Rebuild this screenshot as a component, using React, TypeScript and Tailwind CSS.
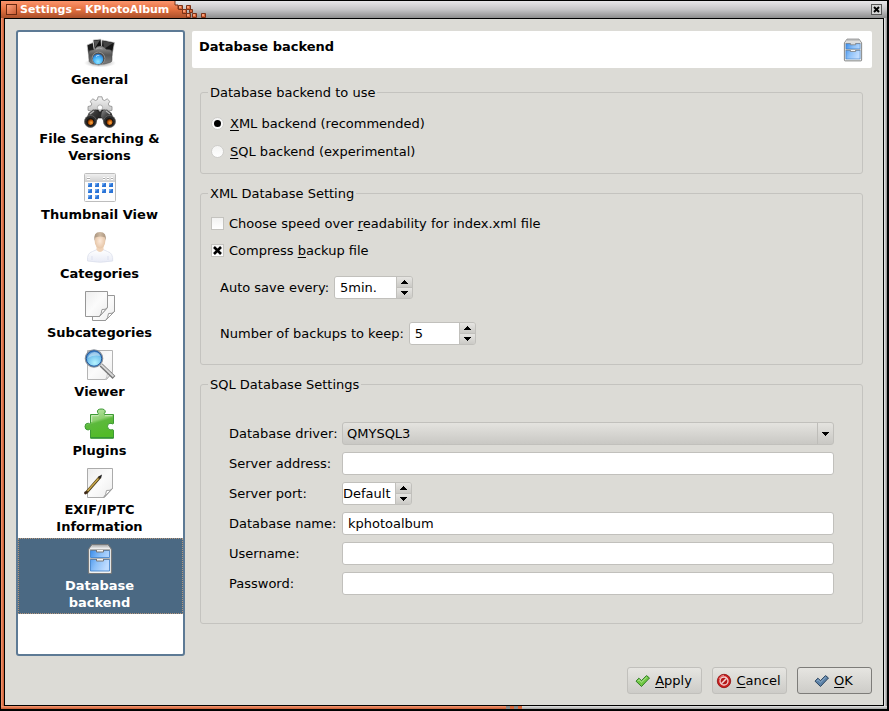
import { useState, type ReactNode } from "react";

type IconProps = { size?: number };

function Svg({ size = 32, children }: { size?: number; children: ReactNode }) {
  return (
    <svg width={size} height={size} viewBox="0 0 32 32" aria-hidden="true" className="block shrink-0">
      {children}
    </svg>
  );
}

function CameraIcon() {
  return (
    <Svg>
      <defs>
        <linearGradient id="camBody" x1="0" y1="0" x2="0" y2="1">
          <stop offset="0" stopColor="#9a9a9a" />
          <stop offset="0.5" stopColor="#565656" />
          <stop offset="1" stopColor="#808080" />
        </linearGradient>
        <radialGradient id="camLens" cx="0.5" cy="0.75" r="0.7">
          <stop offset="0" stopColor="#8fe6ff" />
          <stop offset="0.6" stopColor="#45b2f8" />
          <stop offset="1" stopColor="#2a78cc" />
        </radialGradient>
        <radialGradient id="camShade">
          <stop offset="0" stopColor="#555" stopOpacity="0.8" />
          <stop offset="1" stopColor="#999" stopOpacity="0" />
        </radialGradient>
      </defs>
      <ellipse cx="16" cy="26" rx="16" ry="4.5" fill="url(#camShade)" />
      <path d="M3 8 9 5.500 12 20 5 22Z" fill="#1c1c1c" stroke="#d5d5d5" strokeWidth="0.7" />
      <path d="M9 3 17 2 18 15 11 17Z" fill="#111" stroke="#ddd" strokeWidth="0.8" />
      <path d="M18 3 30.500 5.500 28 19 17 16Z" fill="#151515" stroke="#ccc" strokeWidth="0.7" />
      <path d="m19 4 10 2-9 6z" fill="#444" />
      <path d="m10 4 6-1-5 8z" fill="#555" />
      <path d="M5 15q0-1.500 2-1.800l3-.5 3-3q4-1.500 7 .5l2 2 4 .6q2 .4 2 2.200v8q0 2-2 2.500l-6 1.500H9l-3-1.500q-1-.5-1-2.500z" fill="url(#camBody)" stroke="#444" strokeWidth="0.5" />
      <path d="M12 12q3-2 6.500 0" stroke="#aaa" fill="none" />
      <circle cx="14.500" cy="21.500" r="6.400" fill="#4c4c4c" stroke="#8d8d8d" />
      <circle cx="14" cy="22" r="5.200" fill="url(#camLens)" />
      <path d="M11 20q2-2.600 5-1.700-2.500.6-5 1.700" fill="#d8f2ff" />
    </Svg>
  );
}

function SearchVersionsIcon() {
  return (
    <Svg>
      <defs>
        <linearGradient id="gear" x1="0" y1="0" x2="0" y2="1">
          <stop offset="0" stopColor="#f4f4f4" />
          <stop offset="1" stopColor="#b9b9b9" />
        </linearGradient>
        <linearGradient id="tube" x1="0" y1="0" x2="1" y2="1">
          <stop offset="0" stopColor="#8c8c8c" />
          <stop offset="0.45" stopColor="#3a3a3a" />
          <stop offset="1" stopColor="#151515" />
        </linearGradient>
        <radialGradient id="amber" cx="0.6" cy="0.6">
          <stop offset="0" stopColor="#ffb450" />
          <stop offset="0.6" stopColor="#c9610c" />
          <stop offset="1" stopColor="#5a2500" />
        </radialGradient>
      </defs>
      <path d="M14 .8h4l.6 2.800 2 .9 2.600-1.700 2.600 2.600-1.500 2.500.8 1.900 2.900.7v3.800l-3 .7L21 19H11l-4-4-3-.7v-3.800l3-.7.8-1.900-1.600-2.500 2.700-2.600 2.500 1.700 2-.9z" fill="url(#gear)" stroke="#8c8c8c" strokeWidth="0.800" />
      <circle cx="16" cy="11.500" r="2.600" fill="#fff" stroke="#999" strokeWidth="0.7" />
      <path d="M11 14h3l1.500 2h1l1.500-2h3l1 3-4 5h-4l-4-5z" fill="#2b2b2b" stroke="#111" strokeWidth="0.6" />
      <path d="M4.500 17 9 13.500q3-.5 5 2l1 5-4 8L1 26z" fill="url(#tube)" />
      <path d="M27.500 17 23 13.500q-3-.5-5 2l-1 5 4 8L31 26z" fill="url(#tube)" />
      <circle cx="6.500" cy="25.500" r="6" fill="#2c2c2c" stroke="#666" strokeWidth="0.8" />
      <circle cx="25.500" cy="25.500" r="6" fill="#2c2c2c" stroke="#666" strokeWidth="0.8" />
      <circle cx="6.500" cy="26" r="3.600" fill="url(#amber)" stroke="#111" />
      <circle cx="25.500" cy="26" r="3.600" fill="url(#amber)" stroke="#111" />
      <path d="m6 18 4-3M26 18l-4-3" stroke="#b5b5b5" strokeWidth="1.200" />
    </Svg>
  );
}

function CalendarIcon() {
  const cells = [
    [4, 11], [11, 11], [18, 11], [25, 11],
    [4, 17], [11, 17], [18, 17], [25, 17],
    [4, 23], [11, 23],
  ];
  return (
    <Svg>
      <defs>
        <linearGradient id="calTop" x1="0" y1="0" x2="0" y2="1">
          <stop offset="0" stopColor="#efefef" />
          <stop offset="1" stopColor="#cfcfcf" />
        </linearGradient>
      </defs>
      <rect x="0.500" y="1.500" width="31" height="28" rx="1" fill="#fdfdfd" stroke="#bdbdbd" />
      <rect x="1" y="2" width="30" height="8" fill="url(#calTop)" />
      <path d="M3 5.500h3M19 5.500h2M23 5.500h2M27 5.500h2M3 7.500h3M19 7.500h2M23 7.500h2M27 7.500h2" stroke="#fff" />
      <path d="M3 6.500h3M19 6.500h2M23 6.500h2M27 6.500h2" stroke="#aaa" />
      {cells.map(([x, y]) => (
        <g key={`${x}-${y}`}>
          <rect x={x} y={y} width="4" height="4" fill="#2b74d6" />
          <path d={`M${x} ${y}h3l-3 3z`} fill="#6fa8ef" />
        </g>
      ))}
    </Svg>
  );
}

function PersonIcon() {
  return (
    <Svg>
      <defs>
        <radialGradient id="face">
          <stop offset="0" stopColor="#fdeada" />
          <stop offset="1" stopColor="#e6c6a8" />
        </radialGradient>
        <linearGradient id="shirt" x1="0" y1="0" x2="0" y2="1">
          <stop offset="0" stopColor="#fff" />
          <stop offset="1" stopColor="#e8ebf6" />
        </linearGradient>
        <linearGradient id="hair" x1="0" y1="0" x2="1" y2="0">
          <stop offset="0" stopColor="#a8917b" />
          <stop offset="0.5" stopColor="#cdb9a2" />
          <stop offset="1" stopColor="#ab947d" />
        </linearGradient>
      </defs>
      <path d="M3.500 30q-.7-8 5-9.500l4.500-2h6l4.500 2q5.800 1.500 5.200 9.500-12.500 2.500-25.200 0" fill="url(#shirt)" stroke="#dcdfec" strokeWidth="0.8" />
      <path d="M12.500 15h7v4q-3.500 4-7 0z" fill="#f0d3b8" />
      <ellipse cx="16" cy="10" rx="5.300" ry="7.500" fill="url(#face)" />
      <path d="M10.500 10Q9 1 16 1t5.700 9l-1-3.500q-4-2-9.200 0z" fill="url(#hair)" />
      <path d="M8 29v-4M24 29v-4" stroke="#dde1ef" />
    </Svg>
  );
}

function PageGradient({ id }: { id: string }) {
  return (
    <linearGradient id={id} x1="0" y1="0" x2="1" y2="1">
      <stop offset="0" stopColor="#ededed" />
      <stop offset="0.5" stopColor="#fbfbfb" />
      <stop offset="1" stopColor="#ececec" />
    </linearGradient>
  );
}

function CopyIcon() {
  return (
    <Svg>
      <defs>
        <PageGradient id="copyPage" />
      </defs>
      <path d="M8.500 5.500h22v16l-9 9h-13z" fill="url(#copyPage)" stroke="#979797" />
      <path d="M30.500 21.500q-2 2.500-6 2-.5 5-3 7z" fill="#fff" stroke="#979797" />
      <path d="M1.500 1.500h22v16l-8 9h-14z" fill="url(#copyPage)" stroke="#979797" />
      <path d="M23.500 17.500q-2 2.500-5.500 2-.5 4.500-2.500 7z" fill="#fff" stroke="#979797" />
    </Svg>
  );
}

function ViewerIcon() {
  return (
    <Svg>
      <defs>
        <PageGradient id="viewPage" />
        <radialGradient id="lens" cx="0.55" cy="0.75" r="0.75">
          <stop offset="0" stopColor="#b5f4ff" />
          <stop offset="0.55" stopColor="#79c6ee" />
          <stop offset="1" stopColor="#3a78c2" />
        </radialGradient>
      </defs>
      <path d="M3.500 1.500h25v22l-6 7h-19z" fill="url(#viewPage)" stroke="#b4b4b4" />
      <path d="M28.500 23q-2 2-5 1.500-.3 3.500-2 6z" fill="#fff" stroke="#c5c5c5" />
      <path d="m17 16 13 12.500" stroke="#777" strokeWidth="4" />
      <path d="m17 15.500 12.500 12" stroke="#d8d8d8" strokeWidth="1.800" />
      <circle cx="10" cy="9.500" r="8.500" fill="url(#lens)" stroke="#8a929a" strokeWidth="1.600" />
      <circle cx="10" cy="9.500" r="7.700" fill="none" stroke="#1f5ba6" />
      <path d="M4 9q1-5 6.500-6 5 .5 5.500 4-6-1.500-12 2" fill="#fff" opacity="0.400" />
    </Svg>
  );
}

function PuzzleIcon() {
  return (
    <Svg>
      <defs>
        <linearGradient id="puzzle" x1="0" y1="0" x2="0.3" y2="1">
          <stop offset="0" stopColor="#c2e8af" />
          <stop offset="0.45" stopColor="#8ed070" />
          <stop offset="0.55" stopColor="#5cb93c" />
          <stop offset="1" stopColor="#52bb28" />
        </linearGradient>
      </defs>
      <path d="M6.500 6.500h7.500q.8-1-.5-2.300Q12.800 1.200 17 1t4.300 3q-1.600 1.600-.8 2.500h9v9q-1 .9-2.500-.2-3.500-.5-3.500 3t3.500 3.700q1.500-1 2.500.2v8h-23v-8.400q-1-.9-2.400.2Q1 21.800 1 18.500t3.200-3.300q1.500 1 2.300.1z" fill="url(#puzzle)" stroke="#3d9a35" strokeWidth="1" />
      <path d="M7.700 14V7.700h7M21 7.700h7.300" stroke="#d8f3ca" fill="none" opacity="0.800" />
      <path d="M7 29.800h22" stroke="#2b8b3c" />
    </Svg>
  );
}

function ExifIcon() {
  return (
    <Svg>
      <defs>
        <PageGradient id="exifPage" />
      </defs>
      <path d="M3.500 1.500h25v20l-8 9h-17z" fill="url(#exifPage)" stroke="#ababab" />
      <path d="M28.500 21.500q-2 2.500-6 2-.3 4-3 7z" fill="#fff" stroke="#a0a0a0" />
      <path d="M2 26 16 10" stroke="#4a3a18" strokeWidth="2.800" />
      <path d="M3.500 24 14.500 11.500" stroke="#c9a84a" strokeWidth="1.500" />
      <path d="m14.500 9.500 3.500-2-1 4z" fill="#222" />
      <circle cx="1.500" cy="26" r="1.400" fill="#3b2416" />
    </Svg>
  );
}

function CabinetIcon({ size = 32 }: IconProps) {
  return (
    <Svg size={size}>
      <defs>
        <linearGradient id="cabTop" x1="0" y1="0" x2="0" y2="1">
          <stop offset="0" stopColor="#ababab" />
          <stop offset="1" stopColor="#f7f7f7" />
        </linearGradient>
        <linearGradient id="drawer" x1="0" y1="0" x2="1" y2="0.5">
          <stop offset="0" stopColor="#3c8dea" />
          <stop offset="0.5" stopColor="#8cc0f8" />
          <stop offset="1" stopColor="#bfdcff" />
        </linearGradient>
      </defs>
      <path d="M4.500 6.500 8 1.500h16l3.500 5v23q0 1-1 1h-21q-1 0-1-1z" fill="#f2f2f0" stroke="#77797a" strokeWidth="1.200" />
      <path d="M5.500 6 8.500 2h15l3 4z" fill="url(#cabTop)" />
      <path d="M6.500 7.500h19v7h-19zM6.500 16.500h19V28h-19z" fill="url(#drawer)" stroke="#367bc8" strokeWidth="0.800" />
      <path d="M6 7h20M6 16h20" stroke="#777" />
      <path d="M12.500 7v2h7V7M12.500 16v2h7v-2" fill="#f5f5f5" stroke="#777" />
    </Svg>
  );
}

function CheckIcon({ tone }: { tone: "green" | "blue" }) {
  const dark = tone === "green" ? "#2e7d22" : "#2b4560";
  const fill = tone === "green" ? "#72c844" : "#5d82a8";
  const shine = tone === "green" ? "#b5e59a" : "#91afcb";
  return (
    <svg width="16" height="16" viewBox="0 0 16 16" aria-hidden="true" className="shrink-0">
      <path d="M1 8.200 3.800 5.200 6.500 7.600l5-5 3 2.400-8 8.500z" fill={fill} stroke={dark} strokeLinejoin="round" />
      <path d="M2.600 8.200 4 6.700l2.500 2.400 5.200-5" fill="none" stroke={shine} />
    </svg>
  );
}

function CancelIcon() {
  return (
    <svg width="16" height="16" viewBox="0 0 16 16" aria-hidden="true" className="shrink-0">
      <circle cx="8" cy="8" r="6.700" fill="#c91f1f" stroke="#8c0d0d" strokeWidth="0.8" />
      <circle cx="8" cy="8" r="4" fill="#b51818" stroke="#f3d5d5" strokeWidth="1.300" />
      <path d="m5.300 10.700 5.400-5.400" stroke="#f3d5d5" strokeWidth="1.600" />
      <path d="M3 6q1.500-3.500 5-3.800" stroke="#ef8d8d" fill="none" />
    </svg>
  );
}

const pages: { name: string; icon: ReactNode }[] = [
  { name: "General", icon: <CameraIcon /> },
  { name: "File Searching & Versions", icon: <SearchVersionsIcon /> },
  { name: "Thumbnail View", icon: <CalendarIcon /> },
  { name: "Categories", icon: <PersonIcon /> },
  { name: "Subcategories", icon: <CopyIcon /> },
  { name: "Viewer", icon: <ViewerIcon /> },
  { name: "Plugins", icon: <PuzzleIcon /> },
  { name: "EXIF/IPTC Information", icon: <ExifIcon /> },
  { name: "Database backend", icon: <CabinetIcon /> },
];

function Key({ children }: { children: ReactNode }) {
  return <span className="underline decoration-1 underline-offset-2">{children}</span>;
}

function TitleBar() {
  return (
    <header className="flex h-[17px] bg-linear-to-b from-[#e9e7ea] via-[#c6c5c7] to-[#8d8d8d]">
      <div className="flex items-center bg-linear-to-b from-[#fb946c] via-[#e4703f] to-[#a9502b] pl-[5px]">
        <button aria-label="Window menu" className="size-[11px] border border-[#6b2a12] bg-linear-to-br from-[#ffa27c] to-[#c95c33]" />
        <h1 className="pr-1 pl-[3px] text-[11px] leading-[15px] font-bold whitespace-nowrap text-white">Settings – KPhotoAlbum</h1>
      </div>
      <svg width="34" height="17" viewBox="0 0 34 17" aria-hidden="true">
        <defs>
          <linearGradient id="titleEnd" x1="0" y1="0" x2="0" y2="1">
            <stop offset="0" stopColor="#fb946c" />
            <stop offset="0.5" stopColor="#e4703f" />
            <stop offset="1" stopColor="#a9502b" />
          </linearGradient>
        </defs>
        <path d="M0 0h2v4h3v4h6v4h4v5H0z" fill="url(#titleEnd)" />
        <path d="M2 0v4h3v4" fill="none" stroke="#7a3218" />
        <path d="M5.500 4.500h4v4h-4zM13.500 4.500h4v4h-4zM9.500 8.500h4v4h-4zM16.500 8.500h3v3h-3zM13.500 12.500h4v4h-4zM19.500 12.500h4v4h-4zM28.500 12.500h4v4h-4z" fill="#d9683b" stroke="#7a3218" />
        <path d="M6 5h2v2H6zM14 5h2v2h-2zM10 9h2v2h-2zM14 13h2v2h-2zM20 13h2v2h-2zM29 13h2v2h-2z" fill="#f99c74" />
      </svg>
      <button aria-label="Close" className="mt-[3px] mr-[5px] ml-auto grid size-[11px] place-items-center border border-[#555] bg-[#d5d5d5]">
        <svg width="7" height="7" viewBox="0 0 7 7" aria-hidden="true">
          <path d="m1 1 5 5M6 1 1 6" stroke="#000" strokeWidth="2" />
        </svg>
      </button>
    </header>
  );
}

function Group({ title, children }: { title: string; children: ReactNode }) {
  return (
    <fieldset className="min-w-0 rounded-[3px] border border-[#c4c3bf]">
      <legend className="ml-[7px] px-0.5 leading-[17px]">{title}</legend>
      {children}
    </fieldset>
  );
}

function Radio({ checked, onChange, children }: { checked: boolean; onChange: () => void; children: ReactNode }) {
  return (
    <label className="flex items-center gap-[6px] leading-[17px]">
      <span className="grid place-items-center *:col-start-1 *:row-start-1">
        <input type="radio" name="backend" checked={checked} onChange={onChange} className="peer size-[13px] appearance-none rounded-full border border-[#cfcecb] bg-linear-to-b from-[#f4f4f3] to-white" />
        <span className="pointer-events-none hidden size-[7px] rounded-full bg-black peer-checked:block" />
      </span>
      <span>{children}</span>
    </label>
  );
}

function Check({ defaultChecked, children }: { defaultChecked?: boolean; children: ReactNode }) {
  return (
    <label className="flex items-center gap-[5px] leading-[17px]">
      <span className="grid place-items-center *:col-start-1 *:row-start-1">
        <input type="checkbox" defaultChecked={defaultChecked} className="peer size-[13px] appearance-none border border-[#c4c3bf] bg-linear-to-b from-[#f2f2f1] to-white" />
        <svg width="9" height="9" viewBox="0 0 9 9" aria-hidden="true" className="pointer-events-none hidden peer-checked:block">
          <path d="m1 1 7 7M8 1 1 8" stroke="#000" strokeWidth="2.600" />
        </svg>
      </span>
      <span>{children}</span>
    </label>
  );
}

function Arrow({ down }: { down?: boolean }) {
  return (
    <svg width="7" height="4" viewBox="0 0 7 4" aria-hidden="true" shapeRendering="crispEdges">
      <path d={down ? "M0 0h7v1H6v1H5v1H4v1H3V3H2V2H1V1H0z" : "M0 4h7V3H6V2H5V1H4V0H3v1H2v1H1v1H0z"} />
    </svg>
  );
}

function Spin({ id, value, width, pad }: { id: string; value: string; width: string; pad: string }) {
  const step = "grid flex-1 place-items-center bg-linear-to-b from-[#e6e5e2] to-[#cbcac6]";
  return (
    <div className="flex h-[23px] w-fit overflow-hidden rounded-[3px] border border-[#c1c0bc]">
      <input id={id} defaultValue={value} className={`${width} ${pad} h-full bg-white outline-none`} />
      <div className="flex w-4 flex-col border-l border-[#c1c0bc]">
        <button aria-label="Increase" className={step}><Arrow /></button>
        <button aria-label="Decrease" className={`${step} border-t border-[#c1c0bc]`}><Arrow down /></button>
      </div>
    </div>
  );
}

function Row({ id, label, children }: { id: string; label: string; children: ReactNode }) {
  return (
    <>
      <label htmlFor={id} className="leading-[23px] whitespace-nowrap">{label}</label>
      {children}
    </>
  );
}

const field = "h-[23px] w-full min-w-0 rounded-[3px] border border-[#c1c0bc] bg-white px-[5px] outline-none";
const button = "flex h-[27px] w-[75px] items-center justify-center gap-1 rounded-[3px] border bg-linear-to-b from-[#e6e5e1] to-[#cdccc8] pr-0.5";

export default function App() {
  const [backend, setBackend] = useState("xml");
  const [page, setPage] = useState("Database backend");

  return (
    <div className="flex min-h-screen flex-col bg-black pt-px pr-0.5 pb-0.5 pl-px font-['DejaVu_Sans',sans-serif] text-[13px] text-black">
      <TitleBar />
      <div className="flex flex-1">
        <div className="w-[3px] bg-linear-to-r from-[#f99a74] to-[#c55a31]" />
        <main className="flex min-w-0 flex-1 flex-col gap-[11px] border border-black bg-[#dcdbd6] p-[11px]">
          <div className="flex flex-1 gap-[7px]">
            <nav className="w-[169px] shrink-0 rounded-[3px] border-2 border-[#5d7a95] bg-white">
              {pages.map(({ name, icon }) => (
                <button
                  key={name}
                  onClick={() => setPage(name)}
                  aria-current={name === page ? "page" : undefined}
                  className={`flex w-full flex-col items-center gap-0.5 pt-[5px] pr-[13px] pb-[3px] pl-[11px] leading-[17px] font-bold ${
                    name === page ? "bg-[#4b6983] text-white outline-1 -outline-offset-1 outline-dotted outline-[#b4967c]" : ""
                  }`}
                >
                  {icon}
                  <span className={name === "Database backend" ? "w-24" : ""}>{name}</span>
                </button>
              ))}
            </nav>
            <div className="min-w-0 flex-1 pt-px">
              <div className="flex h-[37px] justify-between rounded-[2px] bg-white px-[7px] pt-[7px] pb-[6px]">
                <h2 className="leading-[17px] font-bold">Database backend</h2>
                <CabinetIcon size={24} />
              </div>
              <div className="mt-4 mr-[9px] ml-2 flex flex-col gap-[11px]">
                <Group title="Database backend to use">
                  <div className="flex flex-col gap-[11px] px-[10px] pt-[14px] pb-[13px]">
                    <Radio checked={backend === "xml"} onChange={() => setBackend("xml")}><Key>X</Key>ML backend (recommended)</Radio>
                    <Radio checked={backend === "sql"} onChange={() => setBackend("sql")}><Key>S</Key>QL backend (experimental)</Radio>
                  </div>
                </Group>
                <Group title="XML Database Setting">
                  <div className="flex flex-col gap-[10px] px-[10px] pt-[13px]">
                    <Check>Choose speed over <Key>r</Key>eadability for index.xml file</Check>
                    <Check defaultChecked>Compress <Key>b</Key>ackup file</Check>
                  </div>
                  <div className="flex flex-col gap-[23px] px-[19px] pt-[17px] pb-[19px]">
                    <div className="flex items-center gap-[5px]">
                      <label htmlFor="autosave">Auto save every:</label>
                      <Spin id="autosave" value="5min." width="w-[61px]" pad="px-[5px]" />
                    </div>
                    <div className="flex items-center gap-[5px]">
                      <label htmlFor="backups">Number of backups to keep:</label>
                      <Spin id="backups" value="5" width="w-[49px]" pad="px-[5px]" />
                    </div>
                  </div>
                </Group>
                <Group title="SQL Database Settings">
                  <div className="grid grid-cols-[113px_minmax(0,1fr)] gap-y-[7px] px-7 pt-[29px] pb-7">
                    <Row id="driver" label="Database driver:">
                      <div className="grid h-[23px] items-center overflow-hidden rounded-[3px] border border-[#c1c0bc] bg-linear-to-b from-[#e4e3df] to-[#c9c8c4] *:col-start-1 *:row-start-1">
                        <select id="driver" className="h-full w-full appearance-none px-1 outline-none">
                          <option>QMYSQL3</option>
                        </select>
                        <span className="pointer-events-none grid h-full w-4 place-items-center justify-self-end border-l border-[#bebdb9]"><Arrow down /></span>
                      </div>
                    </Row>
                    <Row id="server" label="Server address:"><input id="server" className={field} /></Row>
                    <Row id="port" label="Server port:"><Spin id="port" value="Default" width="w-[52px]" pad="px-0" /></Row>
                    <Row id="dbname" label="Database name:"><input id="dbname" defaultValue="kphotoalbum" className={field} /></Row>
                    <Row id="user" label="Username:"><input id="user" className={field} /></Row>
                    <Row id="password" label="Password:"><input id="password" type="password" className={field} /></Row>
                  </div>
                </Group>
              </div>
            </div>
          </div>
          <footer className="flex justify-end gap-[10px]">
            <button className={`${button} border-[#c1c0bc]`}><CheckIcon tone="green" /><span><Key>A</Key>pply</span></button>
            <button className={`${button} border-[#c1c0bc]`}><CancelIcon /><span><Key>C</Key>ancel</span></button>
            <button className={`${button} border-[#7d7c79]`}><CheckIcon tone="blue" /><span><Key>O</Key>K</span></button>
          </footer>
        </main>
        <div className="w-[3px] bg-linear-to-r from-[#f2f2f2] to-[#8c8c8c]" />
      </div>
      <div className="flex h-[3px]">
        <div className="w-[57%] bg-linear-to-b from-[#f99a74] to-[#c55a31]" />
        <div className="w-1 bg-[#8a8a8a]" />
        <div className="w-1 bg-[#d9683b]" />
        <div className="w-1 bg-[#8a8a8a]" />
        <div className="w-1 bg-[#d9683b]" />
        <div className="flex-1 bg-linear-to-b from-[#e5e5e5] to-[#a0a0a0]" />
      </div>
    </div>
  );
}
